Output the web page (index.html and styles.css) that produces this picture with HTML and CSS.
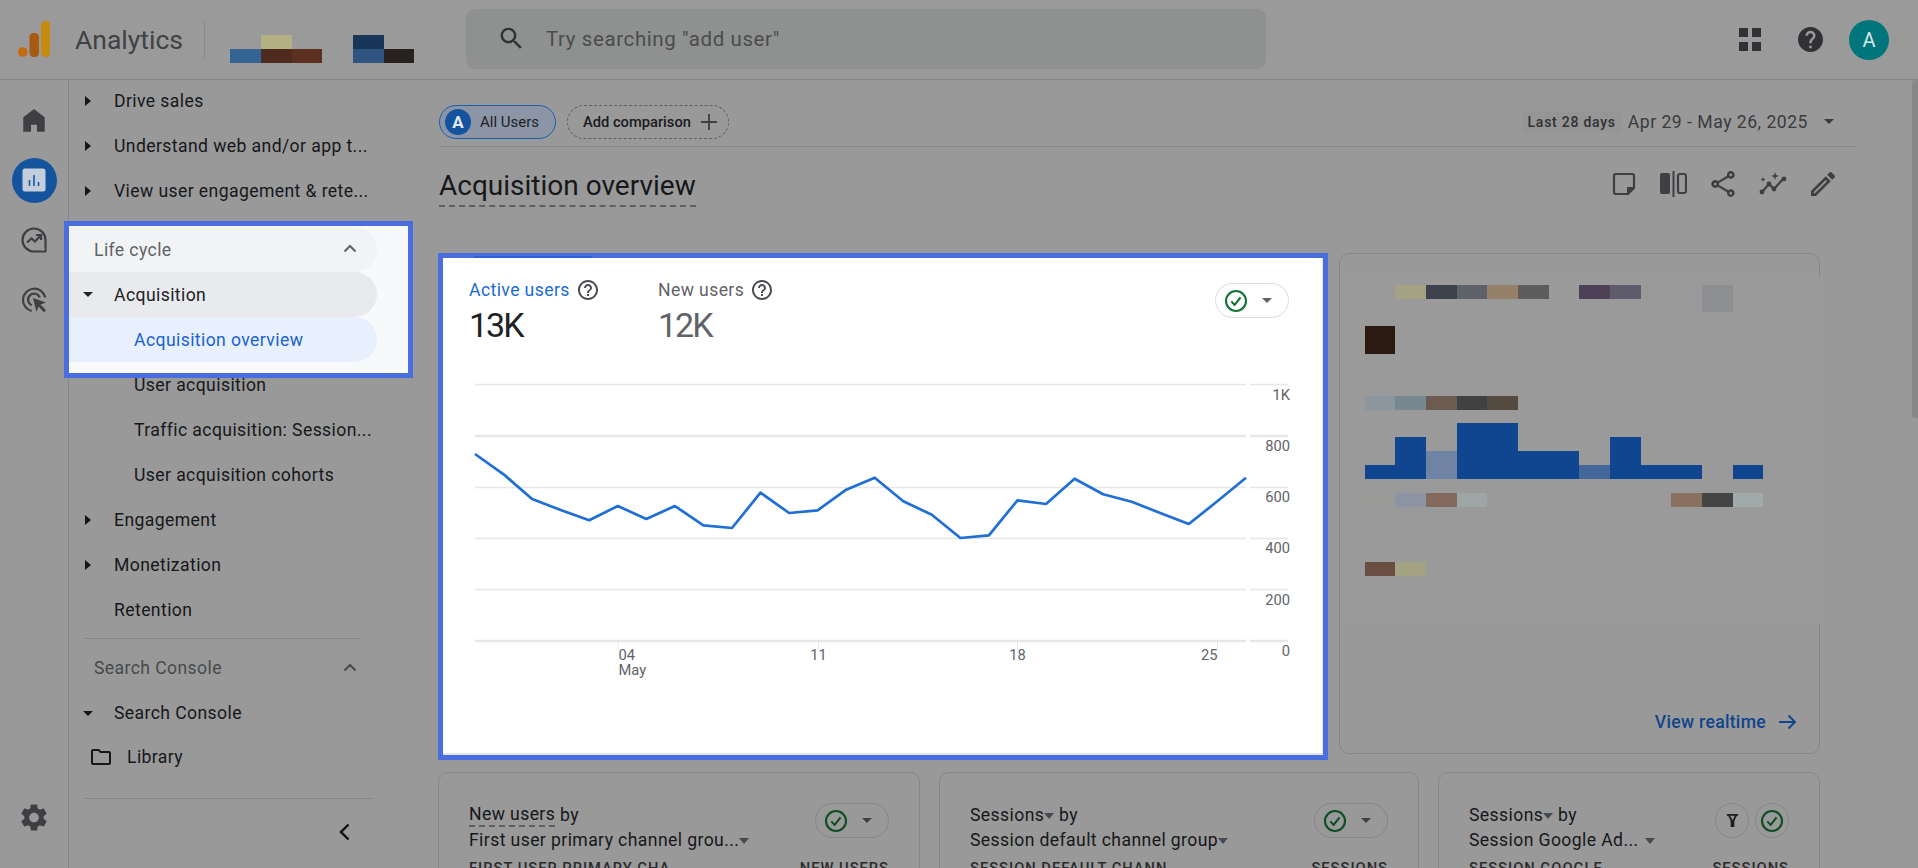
FILE: index.html
```html
<!DOCTYPE html>
<html lang="en">
<head>
<meta charset="utf-8">
<title>Acquisition overview - Analytics</title>
<link rel="stylesheet" href="styles.css">
</head>
<body>
<svg class="sprite" aria-hidden="true">
  <symbol id="check" viewBox="0 0 24 24"><circle cx="12" cy="12" r="10" fill="none" stroke="currentColor" stroke-width="2.100"/><path d="M7.300 12.400l3.300 3.500 6-7.500" fill="none" stroke="currentColor" stroke-width="2.100"/></symbol>
  <symbol id="help-o" viewBox="0 0 24 24"><path fill="currentColor" d="M11 18h2v-2h-2v2zm1-16C6.48 2 2 6.48 2 12s4.48 10 10 10 10-4.48 10-10S17.52 2 12 2zm0 18c-4.41 0-8-3.59-8-8s3.59-8 8-8 8 3.59 8 8-3.59 8-8 8zm0-14c-2.21 0-4 1.79-4 4h2c0-1.1.9-2 2-2s2 .9 2 2c0 2-3 1.75-3 5h2c0-2.25 3-2.5 3-5 0-2.21-1.79-4-4-4z"/></symbol>
</svg>

<header class="topbar">
  <svg class="logo" viewBox="0 0 32 36" width="32" height="36"><rect x="23" width="9.5" height="36" rx="4.2" fill="#c48b10"/><rect x="11.5" y="12" width="9.5" height="24" rx="4.2" fill="#a85a10"/><circle cx="4.8" cy="31" r="4.8" fill="#c46a10"/></svg>
  <span class="brand">Analytics</span>
  <span class="brand-rule"></span>
  <svg class="account-blocks" viewBox="0 0 184 28" width="184" height="28">
    <rect x="0" y="14" width="31" height="14" fill="#336494"/>
    <rect x="31" y="0" width="31" height="14" fill="#b3b184"/>
    <rect x="31" y="14" width="31" height="14" fill="#4e2b1e"/>
    <rect x="62" y="14" width="30" height="14" fill="#5c3020"/>
    <rect x="123" y="0" width="31" height="14" fill="#183658"/>
    <rect x="123" y="14" width="31" height="14" fill="#2f547f"/>
    <rect x="154" y="14" width="30" height="14" fill="#27221f"/>
  </svg>
  <div class="search">
    <svg class="search-icon" viewBox="0 0 24 24" width="29" height="29"><path fill="currentColor" d="M15.5 14h-.79l-.28-.27C15.41 12.59 16 11.11 16 9.5 16 5.91 13.09 3 9.5 3S3 5.91 3 9.5 5.91 16 9.5 16c1.61 0 3.09-.59 4.23-1.57l.27.28v.79l5 4.99L20.49 19l-4.99-5zm-6 0C7.01 14 5 11.99 5 9.5S7.01 5 9.5 5 14 7.01 14 9.5 11.99 14 9.5 14z"/></svg>
    <span>Try searching "add user"</span>
  </div>
  <div class="top-actions">
    <svg class="apps" viewBox="0 0 22 23" width="22" height="23"><rect width="9" height="9" fill="currentColor"/><rect x="13" width="9" height="9" fill="currentColor"/><rect y="14" width="9" height="9" fill="currentColor"/><rect x="13" y="14" width="9" height="9" fill="currentColor"/></svg>
    <svg class="help" viewBox="2 2 20 20" width="25" height="25"><path fill="currentColor" d="M12 2C6.48 2 2 6.48 2 12s4.48 10 10 10 10-4.48 10-10S17.52 2 12 2zm1 17h-2v-2h2v2zm2.07-7.75l-.9.92C13.45 12.9 13 13.5 13 15h-2v-.5c0-1.1.45-2.1 1.17-2.83l1.24-1.26c.37-.36.59-.86.59-1.41 0-1.1-.9-2-2-2s-2 .9-2 2H8c0-2.21 1.79-4 4-4s4 1.79 4 4c0 .88-.36 1.68-.93 2.25z"/></svg>
    <span class="avatar">A</span>
  </div>
</header>

<div class="workspace">
  <nav class="rail">
    <span class="rail-item"><svg viewBox="0 0 20 21" width="22" height="23"><path fill="#3d3f42" stroke="#3d3f42" stroke-width="1.600" stroke-linejoin="round" d="M1 20V8l9-7 9 7v12h-5.500v-6.500h-7V20z"/></svg></span>
    <span class="rail-item"><span class="rail-active"><svg viewBox="0 0 24 24" width="24" height="24"><rect x="0.5" y="0.5" width="23" height="23" rx="2.5" fill="#c3cddc"/><path d="M7.5 12v6M12 7v11M16.500 14v4" stroke="#1b57a8" stroke-width="1.600"/></svg></span></span>
    <span class="rail-item"><svg viewBox="0 0 26 26" width="26" height="26"><path d="M24.500 13A11.500 11.500 0 1 0 13 24.500h11.500z" fill="none" stroke="#3d3f42" stroke-width="2.200" stroke-linejoin="round"/><path d="M6 15.500l4.500-4 3.500 3 5.500-6M15 8h5v5" fill="none" stroke="#3d3f42" stroke-width="2.200"/><circle cx="22" cy="22" r="1.600" fill="#999"/></svg></span>
    <span class="rail-item"><svg viewBox="0 0 26 26" width="26" height="26"><path d="M10.700 24A11.300 11.300 0 1 1 24.300 10.500M10.800 18.200A6 6 0 1 1 18.700 10.500" fill="none" stroke="#3d3f42" stroke-width="2.200"/><path d="M12 11l13 4.500-5.500 2 5.500 5.700-2 2-5.500-5.700-2 5.500z" fill="#3d3f42"/></svg></span>
    <span class="rail-item rail-settings"><svg viewBox="2.500 2 19 20" width="26" height="27"><path fill="#3d3f42" d="M19.140 12.940c.04-.3.06-.61.06-.94 0-.32-.02-.64-.07-.94l2.030-1.580c.18-.14.23-.41.12-.61l-1.920-3.320c-.12-.22-.37-.29-.59-.22l-2.390.96c-.5-.38-1.030-.7-1.620-.94l-.36-2.540c-.04-.24-.24-.41-.48-.41h-3.840c-.24 0-.43.17-.47.41l-.36 2.540c-.59.24-1.130.57-1.620.94l-2.390-.96c-.22-.08-.47 0-.59.22L2.740 8.870c-.12.21-.08.47.12.61l2.030 1.580c-.05.3-.09.63-.09.94s.02.64.07.94l-2.030 1.580c-.18.14-.23.41-.12.61l1.920 3.320c.12.22.37.29.59.22l2.390-.96c.5.38 1.030.7 1.620.94l.36 2.540c.05.24.24.41.48.41h3.840c.24 0 .44-.17.47-.41l.36-2.540c.59-.24 1.130-.56 1.620-.94l2.390.96c.22.08.47 0 .59-.22l1.920-3.320c.12-.22.07-.47-.12-.61l-2.010-1.580zM12 15.600c-1.980 0-3.600-1.620-3.600-3.600s1.620-3.600 3.600-3.600 3.600 1.620 3.600 3.600-1.620 3.600-3.600 3.600z"/></svg></span>
  </nav>

  <aside class="sidebar">
    <div class="nav-list nav-top">
      <div class="nav-row"><i class="tri-right"></i><span>Drive sales</span></div>
      <div class="nav-row"><i class="tri-right"></i><span>Understand web and/or app t...</span></div>
      <div class="nav-row"><i class="tri-right"></i><span>View user engagement &amp; rete...</span></div>
    </div>
    <div class="nav-spotlight">
      <div class="nav-head nav-head-lit"><span>Life cycle</span><svg class="chev" viewBox="0 0 14 9" width="14" height="9"><path d="M1.500 7.500L7 2l5.500 5.500" fill="none" stroke="currentColor" stroke-width="2"/></svg></div>
      <div class="nav-row nav-open"><i class="tri-down"></i><span>Acquisition</span></div>
      <div class="nav-sub nav-current">Acquisition overview</div>
    </div>
    <div class="nav-list">
      <div class="nav-sub">User acquisition</div>
      <div class="nav-sub">Traffic acquisition: Session...</div>
      <div class="nav-sub">User acquisition cohorts</div>
      <div class="nav-row"><i class="tri-right"></i><span>Engagement</span></div>
      <div class="nav-row"><i class="tri-right"></i><span>Monetization</span></div>
      <div class="nav-row nav-plain"><span>Retention</span></div>
    </div>
    <div class="nav-rule"></div>
    <div class="nav-head"><span>Search Console</span><svg class="chev" viewBox="0 0 14 9" width="14" height="9"><path d="M1.500 7.500L7 2l5.500 5.500" fill="none" stroke="currentColor" stroke-width="2"/></svg></div>
    <div class="nav-row"><i class="tri-down"></i><span>Search Console</span></div>
    <div class="nav-library"><svg viewBox="2 4 20 16" width="20" height="16"><path fill="currentColor" d="M9.170 6l2 2H20v10H4V6h5.170M10 4H4c-1.100 0-1.990.9-1.990 2L2 18c0 1.100.9 2 2 2h16c1.100 0 2-.9 2-2V8c0-1.100-.9-2-2-2h-8l-2-2z"/></svg><span>Library</span></div>
    <div class="nav-rule nav-rule-wide"></div>
    <div class="nav-collapse"><svg viewBox="0 0 11 18" width="11" height="18"><path d="M9.500 1.500L2 9l7.500 7.500" fill="none" stroke="#0c0d0f" stroke-width="2.400"/></svg></div>
  </aside>

  <main class="main">
    <div class="filter-bar">
      <div class="chip chip-user"><span class="chip-badge">A</span><span>All Users</span></div>
      <div class="chip chip-add"><span>Add comparison</span><svg viewBox="0 0 16 16" width="16" height="16"><path d="M8 0v16M0 8h16" stroke="#3d3f42" stroke-width="1.800"/></svg></div>
      <div class="date-range"><span class="date-tag">Last 28 days</span><span class="date-text">Apr 29 - May 26, 2025</span><i class="tri-down tri-date"></i></div>
    </div>

    <div class="title-row">
      <h1 class="page-title">Acquisition overview</h1>
      <div class="title-tools">
        <svg viewBox="0 0 24 24" width="24" height="24"><path d="M2 4a2 2 0 0 1 2-2h16a2 2 0 0 1 2 2v12l-6 6H4a2 2 0 0 1-2-2z" fill="none" stroke="currentColor" stroke-width="2.200"/><path d="M22 15h-7v7z" fill="currentColor"/></svg>
        <svg viewBox="0 0 27 26" width="27" height="26"><rect x="0" y="2" width="10" height="21" rx="2" fill="currentColor"/><path d="M13.500 0v26" stroke="currentColor" stroke-width="2"/><rect x="18" y="3" width="8" height="19" rx="2" fill="none" stroke="currentColor" stroke-width="2.200"/></svg>
        <svg viewBox="3 2 18 20" width="24" height="26"><path fill="currentColor" d="M18 16.080c-.76 0-1.440.3-1.960.77L8.910 12.700c.05-.23.09-.46.09-.7s-.04-.47-.09-.7l7.050-4.110c.54.5 1.250.81 2.040.81 1.660 0 3-1.340 3-3s-1.340-3-3-3-3 1.340-3 3c0 .24.04.47.09.7L8.040 9.810C7.500 9.310 6.790 9 6 9c-1.660 0-3 1.340-3 3s1.340 3 3 3c.79 0 1.500-.31 2.040-.81l7.120 4.160c-.05.21-.08.43-.08.65 0 1.610 1.310 2.920 2.920 2.920s2.920-1.310 2.920-2.920-1.310-2.920-2.920-2.920zM18 4c.55 0 1 .45 1 1s-.45 1-1 1-1-.45-1-1 .45-1 1-1zM6 13c-.55 0-1-.45-1-1s.45-1 1-1 1 .45 1 1-.45 1-1 1zm12 7.020c-.55 0-1-.45-1-1s.45-1 1-1 1 .45 1 1-.45 1-1 1z"/></svg>
        <svg viewBox="0 0 28 24" width="28" height="24"><path d="M3 20l7-8 5 5 9-10" fill="none" stroke="currentColor" stroke-width="2.200"/><circle cx="3" cy="20" r="2.400" fill="currentColor"/><circle cx="10" cy="12" r="2.400" fill="currentColor"/><circle cx="15" cy="17" r="2.400" fill="currentColor"/><circle cx="25" cy="7" r="2.400" fill="currentColor"/><path d="M16 0l1 3 3 1-3 1-1 3-1-3-3-1 3-1zM4 5l.7 1.800 1.800.7-1.800.7L4 10l-.7-1.800-1.800-.7 1.800-.7z" fill="currentColor"/></svg>
        <svg viewBox="3 3 18 18" width="24" height="24"><path fill="currentColor" d="M3 17.250V21h3.750L17.810 9.940l-3.750-3.750L3 17.250zM5.920 19H5v-.92l9.060-9.060.92.92L5.920 19zM20.710 7.040c.39-.39.39-1.020 0-1.410l-2.340-2.340c-.39-.39-1.020-.39-1.410 0l-1.830 1.830 3.750 3.750 1.830-1.830z"/></svg>
      </div>
    </div>

    <div class="top-grid">
      <section class="chart-card">
        <div class="metric-row">
          <div class="metric metric-active">
            <div class="metric-label"><span>Active users</span><svg width="24" height="24"><use href="#help-o"/></svg></div>
            <div class="metric-value">13K</div>
          </div>
          <div class="metric metric-new">
            <div class="metric-label"><span>New users</span><svg width="24" height="24"><use href="#help-o"/></svg></div>
            <div class="metric-value">12K</div>
          </div>
          <div class="pill pill-lit"><svg class="pill-check" width="24" height="24"><use href="#check"/></svg><i class="tri-down tri-grey"></i></div>
        </div>
        <svg class="line-chart" viewBox="443 340 880 240" width="880" height="240">
          <g stroke="#e6e7e9" stroke-width="1.500">
            <path d="M475 384.500H1246M1250 384.500H1288M475 487.500H1246M1250 487.500H1288M475 538.500H1246M1250 538.500H1288M475 589.500H1246M1250 589.500H1288"/>
            <path stroke-width="2.400" d="M475 436H1246M1250 436H1288M475 641H1246M1250 641H1288"/>
            <path stroke-width="1" d="M618 641v9M818.500 641v9M1017.500 641v9M1217.500 641v9"/>
          </g>
          <polyline fill="none" stroke="#1f6fd6" stroke-width="2.700" stroke-linejoin="round" points="475,454 503.600,474.300 532.100,499 560.700,510 589.200,520.300 617.800,506 646.300,519 674.900,506 703.400,525.300 732,528 760.500,492.700 789.100,513 817.600,510.300 846.200,489.700 874.700,477.700 903.300,501.300 931.800,514.700 960.400,538 988.900,535.300 1017.500,500.300 1046,504 1074.600,478.700 1103.100,494.300 1131.700,501.700 1160.200,513 1188.800,524 1217.300,501.300 1246,477.700"/>
          <g class="axis-text">
            <text x="1290" y="400" text-anchor="end">1K</text>
            <text x="1290" y="451" text-anchor="end">800</text>
            <text x="1290" y="502" text-anchor="end">600</text>
            <text x="1290" y="553" text-anchor="end">400</text>
            <text x="1290" y="605" text-anchor="end">200</text>
            <text x="1290" y="656" text-anchor="end">0</text>
            <text x="618.500" y="660">04</text>
            <text x="618.500" y="675">May</text>
            <text x="818.500" y="660" text-anchor="middle">11</text>
            <text x="1017.500" y="660" text-anchor="middle">18</text>
            <text x="1217.500" y="660" text-anchor="end">25</text>
          </g>
        </svg>
      </section>

      <section class="realtime-card">
        <svg class="pixels" viewBox="1340 254 478 400" width="478" height="400">
          <rect x="1340" y="277" width="485" height="347" fill="#9a9a9a"/>
          <rect x="1395" y="285" width="31" height="14" fill="#a3a384"/>
          <rect x="1426" y="285" width="31" height="14" fill="#3e424c"/>
          <rect x="1457" y="285" width="30" height="14" fill="#5c6268"/>
          <rect x="1487" y="285" width="31" height="14" fill="#96806a"/>
          <rect x="1518" y="285" width="31" height="14" fill="#5e5d5e"/>
          <rect x="1579" y="285" width="31" height="14" fill="#4e4055"/>
          <rect x="1610" y="285" width="31" height="14" fill="#5e5c6a"/>
          <rect x="1702" y="285" width="31" height="27" fill="#8e8f92"/>
          <rect x="1365" y="326" width="30" height="28" fill="#2b1a12"/>
          <rect x="1365" y="396" width="30" height="14" fill="#8c969f"/>
          <rect x="1395" y="396" width="31" height="14" fill="#778891"/>
          <rect x="1426" y="396" width="31" height="14" fill="#6c5b50"/>
          <rect x="1457" y="396" width="30" height="14" fill="#414043"/>
          <rect x="1487" y="396" width="31" height="14" fill="#544a40"/>
          <rect x="1365" y="465" width="30" height="14" fill="#10468f"/>
          <rect x="1395" y="437" width="31" height="42" fill="#10468f"/>
          <rect x="1426" y="451" width="31" height="28" fill="#6f84a5"/>
          <rect x="1457" y="423" width="61" height="56" fill="#10468f"/>
          <rect x="1518" y="451" width="61" height="28" fill="#10468f"/>
          <rect x="1579" y="465" width="31" height="14" fill="#436899"/>
          <rect x="1610" y="437" width="31" height="42" fill="#10468f"/>
          <rect x="1641" y="465" width="61" height="14" fill="#10468f"/>
          <rect x="1733" y="465" width="30" height="14" fill="#10468f"/>
          <rect x="1365" y="493" width="30" height="14" fill="#9a9a96"/>
          <rect x="1395" y="493" width="31" height="14" fill="#8a94a2"/>
          <rect x="1426" y="493" width="31" height="14" fill="#846a5c"/>
          <rect x="1457" y="493" width="30" height="14" fill="#9da5a5"/>
          <rect x="1671" y="493" width="31" height="14" fill="#8a7060"/>
          <rect x="1702" y="493" width="31" height="14" fill="#444444"/>
          <rect x="1733" y="493" width="30" height="14" fill="#a0aaaa"/>
          <rect x="1365" y="562" width="30" height="14" fill="#6a4e42"/>
          <rect x="1395" y="562" width="31" height="14" fill="#a3a384"/>
        </svg>
        <div class="realtime-link"><span>View realtime</span><svg viewBox="0 0 18 16" width="18" height="16"><path d="M0 8h16M9.500 1.500L16 8l-6.500 6.500" fill="none" stroke="currentColor" stroke-width="1.900"/></svg></div>
      </section>
    </div>

    <div class="bottom-grid">
      <section class="mini-card">
        <div class="mini-head">
          <div class="mini-title">
            <div class="mini-line"><span class="dashed">New users</span>&nbsp;by</div>
            <div class="mini-line"><span>First user primary channel grou...</span><i class="tri-inline"></i></div>
          </div>
          <div class="pill"><svg class="pill-check-dim" width="24" height="24"><use href="#check"/></svg><i class="tri-down tri-grey-dim"></i></div>
        </div>
        <div class="col-head"><span>FIRST USER PRIMARY CHA...</span><span>NEW USERS</span></div>
      </section>
      <section class="mini-card">
        <div class="mini-head">
          <div class="mini-title">
            <div class="mini-line"><span>Sessions</span><i class="tri-inline"></i>&nbsp;by</div>
            <div class="mini-line"><span>Session default channel group</span><i class="tri-inline"></i></div>
          </div>
          <div class="pill"><svg class="pill-check-dim" width="24" height="24"><use href="#check"/></svg><i class="tri-down tri-grey-dim"></i></div>
        </div>
        <div class="col-head"><span>SESSION DEFAULT CHANN...</span><span>SESSIONS</span></div>
      </section>
      <section class="mini-card">
        <div class="mini-head">
          <div class="mini-title">
            <div class="mini-line"><span>Sessions</span><i class="tri-inline"></i>&nbsp;by</div>
            <div class="mini-line"><span>Session Google Ad...</span><i class="tri-inline tri-gap"></i></div>
          </div>
          <div class="pill-pair">
            <div class="pill pill-round"><svg viewBox="0 0 16 16" width="15" height="15"><path d="M2 2h12M4 2l3 6v6h2V8l3-6" fill="none" stroke="#1d1e20" stroke-width="2"/></svg></div>
            <div class="pill pill-round"><svg class="pill-check-dim" width="24" height="24"><use href="#check"/></svg></div>
          </div>
        </div>
        <div class="col-head"><span>SESSION GOOGLE ...</span><span>SESSIONS</span></div>
      </section>
    </div>
  </main>
</div>
<div class="scroll-thumb"></div>
</body>
</html>
```

FILE: styles.css
```css
* { box-sizing: border-box; }
html, body { margin: 0; height: 100%; }
body {
  width: 1918px;
  height: 868px;
  overflow: hidden;
  background: #999;
  color: #16171a;
  font-family: "Roboto", "Liberation Sans", sans-serif;
  display: flex;
  flex-direction: column;
  position: relative;
}
.sprite { display: none; }
svg { display: block; flex: none; }

/* Top bar */
.topbar {
  height: 80px;
  flex: none;
  display: flex;
  align-items: center;
  padding-left: 18px;
  border-bottom: 1px solid #868686;
  background: #9a9a9a;
}
.logo { margin-top: -1px; }
.brand { margin-left: 25px; font-size: 26.500px; color: #3f4144; width: 109px; white-space: nowrap; }
.brand-rule { width: 1px; height: 40px; background: #8a8a8a; margin-left: 20px; }
.account-blocks { margin-left: 25px; margin-top: 18px; }
.search {
  margin-left: 52px;
  width: 800px;
  height: 60px;
  margin-top: -1px;
  background: #8f9190;
  border-radius: 9px;
  display: flex;
  align-items: center;
  padding-left: 31px;
  color: #4a4c4e;
  font-size: 20.500px;
  letter-spacing: .6px;
}
.search-icon { color: #303134; margin-right: 20px; margin-top: -1px; }
.top-actions { margin-left: auto; padding-right: 29px; display: flex; align-items: center; color: #303134; }
.help { margin-left: 37px; }
.avatar {
  margin-left: 26px;
  width: 40px;
  height: 40px;
  border-radius: 50%;
  background: #01757c;
  color: #d7e6e7;
  display: flex;
  align-items: center;
  justify-content: center;
  font-size: 20px;
}

/* Layout */
.workspace { flex: 1; display: flex; min-height: 0; }

/* Rail */
.rail {
  width: 69px;
  flex: none;
  border-right: 1px solid #868686;
  display: flex;
  flex-direction: column;
  padding: 10px 0 21px;
}
.rail-item { height: 60px; display: flex; align-items: center; justify-content: center; }
.rail-active {
  width: 45px;
  height: 45px;
  border-radius: 50%;
  background: #14549f;
  display: flex;
  align-items: center;
  justify-content: center;
}
.rail-settings { margin-top: auto; }

/* Sidebar */
.sidebar { width: 344px; flex: none; font-size: 17.600px; letter-spacing: .4px; }
.nav-top { margin-top: -2px; }
.nav-row, .nav-sub, .nav-head {
  width: 308px;
  height: 45px;
  display: flex;
  align-items: center;
  white-space: nowrap;
}
.nav-row { padding-left: 16px; }
.nav-row > span { margin-left: 23px; }
.nav-plain { padding-left: 45px; }
.nav-plain > span { margin-left: 0; }
.nav-sub { padding-left: 65px; }
.nav-head { padding: 0 20px 0 25px; justify-content: space-between; color: #47494c; }
.chev { margin-top: -2px; }
.tri-right {
  width: 0; height: 0; flex: none;
  border-left: 6px solid #16171a;
  border-top: 5px solid transparent;
  border-bottom: 5px solid transparent;
}
.tri-down {
  width: 0; height: 0; flex: none;
  border-top: 5px solid #16171a;
  border-left: 5px solid transparent;
  border-right: 5px solid transparent;
}
.nav-row > .tri-right { width: 6px; }
.nav-row > .tri-down { margin-left: -2px; }
.nav-row > .tri-down + span { margin-left: 21px; }

.nav-spotlight {
  position: relative;
  margin: 7.500px 0 -15.500px -5px;
  width: 349px;
  height: 157px;
  border: 5px solid #4a6ee0;
  background: #f8f9fa;
  padding-top: 1.500px;
  z-index: 2;
}
.nav-head-lit { background: #f1f3f5; color: #5f6368; border-radius: 0 23px 23px 0; }
.nav-open { background: #e8eaed; color: #202124; border-radius: 0 23px 23px 0; }
.nav-open .tri-down { border-top-color: #202124; }
.nav-current { background: #e8f0fe; color: #1a62d0; border-radius: 0 23px 23px 0; }

.nav-rule { width: 277px; height: 1px; background: #858585; margin: 5.500px 0 7px 15px; }
.nav-rule-wide { width: 289px; margin: 19px 0 0 15px; }
.nav-library { height: 43.500px; display: flex; align-items: center; padding-left: 22px; }
.nav-library span { margin-left: 16px; }
.nav-collapse { padding: 24px 0 0 270px; }

/* Main */
.main { flex: 1; min-width: 0; padding: 25px 62px 0 25px; }
.filter-bar {
  display: flex;
  align-items: center;
  height: 42px;
  padding-bottom: 8px;
  margin-left: 1px;
  border-bottom: 1px solid #868686;
}
.chip { height: 34px; border-radius: 17px; display: flex; align-items: center; }
.chip-user {
  width: 117px;
  background: #8c95a5;
  border: 1.500px solid #1b5eb0;
  padding-left: 5px;
  font-size: 15px;
  color: #202225;
  gap: 9px;
}
.chip-badge {
  width: 26px; height: 26px; border-radius: 50%;
  background: #14549f; color: #e4e8ef;
  display: flex; align-items: center; justify-content: center;
  font-size: 17px; font-weight: 700;
}
.chip-add {
  margin-left: 11px;
  width: 162px;
  border: 1px dashed #5f6062;
  padding-left: 15px;
  gap: 10px;
  font-size: 14.700px;
  font-weight: 500;
  color: #1a1b1e;
}
.date-range { margin-left: auto; display: flex; align-items: center; color: #303134; margin-right: 22px; }
.date-tag {
  background: #959595;
  font-size: 14px;
  font-weight: 500;
  letter-spacing: .75px;
  padding: 2px 6px;
  margin-right: 6px;
}
.date-text { font-size: 17.600px; letter-spacing: .5px; color: #3a3b3e; }
.tri-date { margin-left: 16px; border-top-color: #3a3b3e; }

.title-row {
  display: flex;
  align-items: flex-start;
  justify-content: space-between;
  padding-top: 21px;
  padding-right: 21px;
  height: 106px;
}
.page-title {
  margin: 0 0 0 1px;
  font-size: 28px;
  font-weight: 400;
  line-height: 36px;
  height: 38.500px;
  color: #16171a;
  border-bottom: 2.500px dashed #5f5f5f;
}
.title-tools { display: flex; align-items: center; gap: 24px; color: #3d3f42; padding-top: 3px; }

.top-grid { display: grid; grid-template-columns: 890px 481px; column-gap: 11px; align-items: start; height: 519px; }
.chart-card {
  height: 507px;
  background: #fff;
  border: 5px solid #4a6ee0;
  box-shadow: inset -1px -2px 0 #e3e5e9;
  position: relative;
  z-index: 2;
}
.chart-card::before {
  content: "";
  position: absolute;
  left: 31px;
  top: -2px;
  width: 118px;
  height: 2px;
  background: #2f5fd6;
}
.metric-row { display: flex; height: 82px; padding: 20px 34px 0 26px; position: relative; }
.metric-active { width: 189px; }
.metric-label { display: flex; align-items: center; gap: 6px; font-size: 17.600px; letter-spacing: .4px; height: 24px; color: #5f6368; }
.metric-label svg { color: #4a4c50; }
.metric-active .metric-label span { color: #1a6bd6; }
.metric-value { font-size: 34px; letter-spacing: -2px; line-height: 46px; color: #202124; }
.metric-new .metric-value { color: #5f6368; }
.pill {
  width: 74px;
  height: 35px;
  border-radius: 18px;
  border: 1px solid #858688;
  display: flex;
  align-items: center;
  padding-left: 8px;
  gap: 14px;
  flex: none;
  margin-top: 1px;
}
.pill-lit { border-color: #dadce0; margin-left: auto; margin-top: 5px; }
.pill-check { color: #137333; }
.pill-check-dim { color: #0e4e23; }
.tri-grey { border-top-color: #5f6368; }
.tri-grey-dim { border-top-color: #3e4043; }
.line-chart { overflow: visible; }
.axis-text { font-size: 14.700px; fill: #5f6368; }

.realtime-card {
  height: 501px;
  border: 1px solid #858688;
  border-radius: 10px;
  display: flex;
  flex-direction: column;
}
.pixels { overflow: visible; }
.realtime-link {
  margin-top: auto;
  padding: 0 22px 21px 0;
  display: flex;
  justify-content: flex-end;
  align-items: center;
  gap: 13px;
  font-size: 17.600px;
  letter-spacing: .3px;
  color: #10458b;
  font-weight: 500;
  position: relative;
}

.bottom-grid { display: grid; grid-template-columns: 482px 480px 382px; column-gap: 19px; }
.mini-card {
  height: 200px;
  border: 1px solid #858688;
  border-radius: 10px;
  padding: 29px 30px 0;
}
.mini-head { display: flex; justify-content: space-between; height: 55px; font-size: 17.600px; letter-spacing: .4px; }
.mini-line { height: 25px; display: flex; align-items: center; white-space: nowrap; }
.dashed { border-bottom: 2px dashed #5f5f5f; line-height: 22px; height: 24px; }
.tri-inline {
  width: 0; height: 0;
  border-top: 6px solid #48494c;
  border-left: 5px solid transparent;
  border-right: 5px solid transparent;
  margin-top: 2px;
}
.tri-gap { margin-left: 6px; }
.pill-pair { display: flex; gap: 6px; }
.pill-round { width: 34px; padding: 0; justify-content: center; }
.col-head {
  display: flex;
  justify-content: space-between;
  font-size: 14.700px;
  font-weight: 500;
  letter-spacing: 1px;
  color: #2a2b2e;
  margin-top: 2px;
}

.scroll-thumb {
  position: absolute;
  left: 1912px;
  top: 80px;
  width: 6px;
  height: 338px;
  background: #878787;
  border-radius: 3px 0 0 3px;
}
```
